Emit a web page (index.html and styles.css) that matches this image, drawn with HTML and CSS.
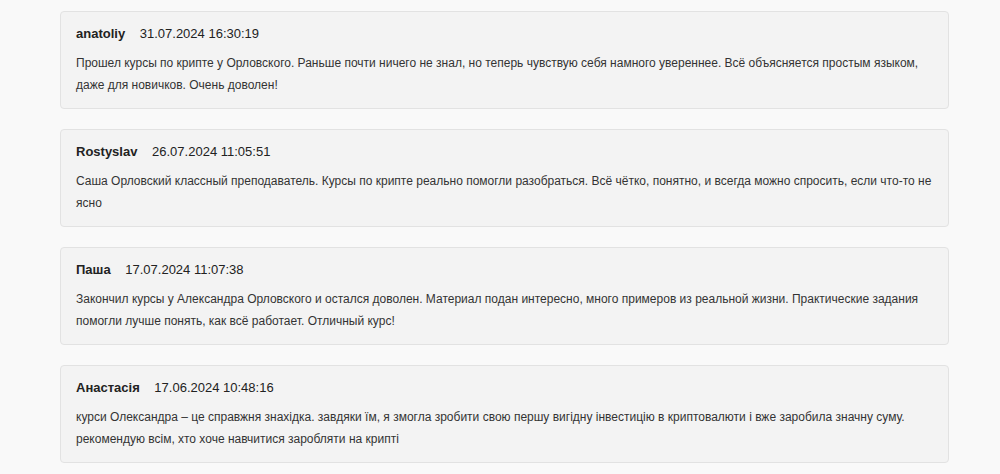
FILE: index.html
```html
<!DOCTYPE html>
<html lang="ru">
<head>
  <meta charset="UTF-8">
  <meta name="viewport" content="width=device-width, initial-scale=1.0">
  <title>Отзывы</title>
  <link rel="stylesheet" href="styles.css">
</head>
<body>
  <div class="reviews">
    <div class="review">
      <div class="review-head">
        <span class="review-name">anatoliy</span>
        <span class="review-date">31.07.2024 16:30:19</span>
      </div>
      <p class="review-text">Прошел курсы по крипте у Орловского. Раньше почти ничего не знал, но теперь чувствую себя намного увереннее. Всё объясняется простым языком, даже для новичков. Очень доволен!</p>
    </div>

    <div class="review">
      <div class="review-head">
        <span class="review-name">Rostyslav</span>
        <span class="review-date">26.07.2024 11:05:51</span>
      </div>
      <p class="review-text">Саша Орловский классный преподаватель. Курсы по крипте реально помогли разобраться. Всё чётко, понятно, и всегда можно спросить, если что-то не ясно</p>
    </div>

    <div class="review">
      <div class="review-head">
        <span class="review-name">Паша</span>
        <span class="review-date">17.07.2024 11:07:38</span>
      </div>
      <p class="review-text">Закончил курсы у Александра Орловского и остался доволен. Материал подан интересно, много примеров из реальной жизни. Практические задания помогли лучше понять, как всё работает. Отличный курс!</p>
    </div>

    <div class="review">
      <div class="review-head">
        <span class="review-name">Анастасія</span>
        <span class="review-date">17.06.2024 10:48:16</span>
      </div>
      <p class="review-text">курси Олександра – це справжня знахідка. завдяки їм, я змогла зробити свою першу вигідну інвестицію в криптовалюти і вже заробила значну суму. рекомендую всім, хто хоче навчитися заробляти на крипті</p>
    </div>
  </div>
</body>
</html>
```

FILE: styles.css
```css
body {
  margin: 0;
  background: #f9f9f9;
  color: #222;
  font-family: "Liberation Sans", Arial, sans-serif;
}

.reviews {
  display: flex;
  flex-direction: column;
  gap: 20px;
  padding: 11px 51px 0 60px;
}

.review {
  background: #f3f3f3;
  border: 1px solid #e2e2e2;
  border-radius: 4px;
  padding: 11px 15px 12px 15px;
  height: 98px;
  box-sizing: border-box;
}

.review-head {
  font-size: 13px;
  line-height: 22px;
}

.review-name {
  font-weight: bold;
  margin-right: 11px;
}

.review-date {
  color: #222;
}

.review-text {
  margin: 7px 0 0 0;
  font-size: 12px;
  line-height: 22px;
  color: #333;
}
```
